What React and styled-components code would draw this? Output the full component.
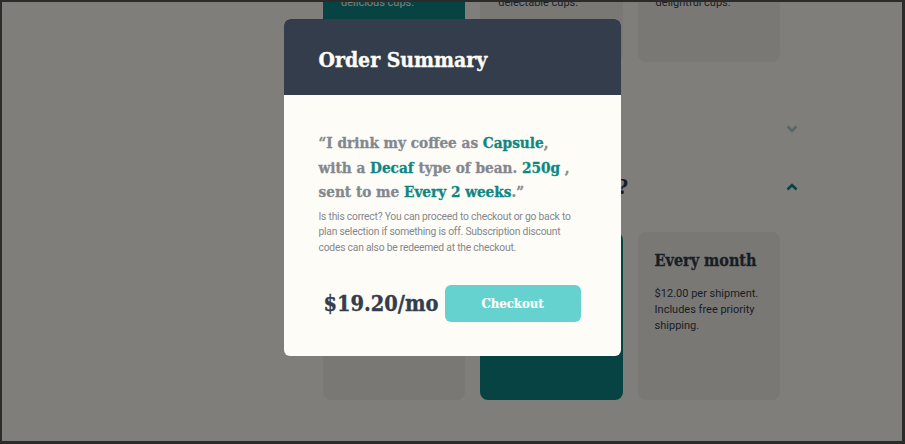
import React from 'react';
import styled, { createGlobalStyle } from 'styled-components';

const serif = `"DejaVu Serif Condensed", "DejaVu Serif", serif`;
const sans = `Roboto, "Liberation Sans", sans-serif`;

const GlobalStyle = createGlobalStyle`
  html, body { margin: 0; padding: 0; }
  body { background: #2b2b2b; }
  * { box-sizing: border-box; }
`;

const Frame = styled.div`
  position: relative;
  margin: 2px 3px 3px 2px;
  height: 439px;
  background: #fefcf7;
  overflow: hidden;
`;

const Plan = styled.div`
  width: 475px;
  margin-left: 321px;
  display: flex;
  flex-direction: column;
`;

const CardRow = styled.div`
  display: grid;
  grid-template-columns: repeat(3, 142.3px);
  column-gap: 15px;
  margin-top: ${p => p.$top}px;
`;

const Card = styled.div`
  height: ${p => p.$h}px;
  border-radius: 8px;
  background: ${p => (p.$active ? '#0e8784' : '#f4f1eb')};
  padding: ${p => p.$pad};
  display: flex;
  flex-direction: column;
  justify-content: ${p => (p.$bottom ? 'flex-end' : 'flex-start')};
`;

const CardTitle = styled.h4`
  margin: 0 0 15px;
  font-family: ${serif};
  font-weight: 700;
  font-size: 16px;
  line-height: 20px;
  -webkit-text-stroke: 0.3px currentColor;
  color: ${p => (p.$active ? '#fefcf7' : '#333d4b')};
`;

const CardText = styled.p`
  margin: 0;
  font-family: ${sans};
  font-size: 11px;
  line-height: 16px;
  color: ${p => (p.$active ? '#fefcf7' : '#333d4b')};
`;

const Line = styled.span`
  display: block;
  white-space: nowrap;
`;

const Question = styled.div`
  display: flex;
  align-items: center;
  justify-content: space-between;
  height: 30px;
  margin-top: ${p => p.$top}px;
`;

const QuestionTitle = styled.h3`
  margin: 0;
  font-family: ${serif};
  font-weight: 700;
  font-size: 20.6px;
  color: #333d4b;
  opacity: ${p => (p.$disabled ? 0.5 : 1)};
`;

const Chevron = styled.svg`
  width: 12px;
  height: 8px;
  opacity: ${p => (p.$disabled ? 0.35 : 1)};
`;

const Overlay = styled.div`
  position: absolute;
  inset: 0;
  background: rgba(0, 0, 0, 0.5);
  display: flex;
  justify-content: center;
  align-items: flex-start;
  padding-top: 17px;
`;

const Modal = styled.div`
  width: 337px;
  border-radius: 6px;
  overflow: hidden;
  background: #fefcf7;
`;

const ModalHeader = styled.div`
  height: 76px;
  background: #333d4b;
  padding: 28px 35px 0;
`;

const ModalTitle = styled.h2`
  margin: 0;
  font-family: ${serif};
  font-weight: 700;
  font-size: 21px;
  line-height: 26px;
  -webkit-text-stroke: 0.35px currentColor;
  color: #fefcf7;
`;

const ModalBody = styled.div`
  padding: 36px 35px 34px;
`;

const Quote = styled.p`
  margin: 0;
  font-family: ${serif};
  font-weight: 700;
  font-size: 15.2px;
  line-height: 24.5px;
  -webkit-text-stroke: 0.3px currentColor;
  color: #83888f;
`;

const Hl = styled.span`
  color: #0e8784;
`;

const Note = styled.p`
  margin: 4px 0 0;
  font-family: ${sans};
  font-size: 10.3px;
  letter-spacing: -0.22px;
  line-height: 15.7px;
  color: #83888f;
`;

const Footer = styled.div`
  display: flex;
  align-items: center;
  justify-content: space-between;
  margin-top: 29px;
  padding: 0 5px;
`;

const Price = styled.span`
  font-family: ${serif};
  font-weight: 700;
  font-size: 21.6px;
  -webkit-text-stroke: 0.35px currentColor;
  color: #333d4b;
`;

const Button = styled.button`
  width: 136px;
  height: 37px;
  border: none;
  border-radius: 6px;
  background: #66d2cf;
  color: #fefcf7;
  font-family: ${serif};
  font-weight: 700;
  font-size: 13px;
  -webkit-text-stroke: 0.2px currentColor;
`;

const ChevronIcon = ({ up, color, disabled }) => (
  <Chevron viewBox="0 0 12 8" $disabled={disabled}>
    <path
      d={up ? 'M1.5 6.5 L6 2 L10.5 6.5' : 'M1.5 1.5 L6 6 L10.5 1.5'}
      fill="none"
      stroke={color}
      strokeWidth="2.6"
    />
  </Chevron>
);

const quantities = [
  { lines: ['Perfect for the solo drinker.', 'Yields about 12', 'delicious cups.'], active: true },
  { lines: ['Perfect option for a couple.', 'Yields about 40', 'delectable cups.'] },
  { lines: ['Perfect for offices and', 'events. Yields about 90', 'delightful cups.'] },
];

const deliveries = [
  { title: 'Every week', text: '$7.20 per shipment. Includes free first-class shipping.' },
  { title: 'Every 2 weeks', text: '$9.60 per shipment. Includes free priority shipping.', active: true },
  { title: 'Every month', text: '$12.00 per shipment. Includes free priority shipping.' },
];

export default function App() {
  return (
    <>
      <GlobalStyle />
      <Frame>
        <Plan>
          <CardRow $top={-100}>
            {quantities.map((q, i) => (
              <Card key={i} $h={160} $active={q.active} $bottom $pad="0 18px 51px">
                <CardText $active={q.active}>
                  {q.lines.map((l, j) => (
                    <Line key={j}>{l}</Line>
                  ))}
                </CardText>
              </Card>
            ))}
          </CardRow>
          <Question $top={52}>
            <QuestionTitle $disabled>Want us to grind them?</QuestionTitle>
            <ChevronIcon color="#0e8784" disabled />
          </Question>
          <Question $top={28}>
            <QuestionTitle>How often should we deliver?</QuestionTitle>
            <ChevronIcon up color="#0e8784" />
          </Question>
          <CardRow $top={30}>
            {deliveries.map((d, i) => (
              <Card key={i} $h={168} $active={d.active} $pad="19px 17px">
                <CardTitle $active={d.active}>{d.title}</CardTitle>
                <CardText $active={d.active}>{d.text}</CardText>
              </Card>
            ))}
          </CardRow>
        </Plan>
        <Overlay>
          <Modal>
            <ModalHeader>
              <ModalTitle>Order Summary</ModalTitle>
            </ModalHeader>
            <ModalBody>
              <Quote>
                <Line>“I drink my coffee as <Hl>Capsule</Hl>,</Line>
                <Line>with a <Hl>Decaf</Hl> type of bean. <Hl>250g</Hl> ,</Line>
                <Line>sent to me <Hl>Every 2 weeks</Hl>.”</Line>
              </Quote>
              <Note>
                <Line>Is this correct? You can proceed to checkout or go back to</Line>
                <Line>plan selection if something is off. Subscription discount</Line>
                <Line>codes can also be redeemed at the checkout.</Line>
              </Note>
              <Footer>
                <Price>$19.20/mo</Price>
                <Button>Checkout</Button>
              </Footer>
            </ModalBody>
          </Modal>
        </Overlay>
      </Frame>
    </>
  );
}
